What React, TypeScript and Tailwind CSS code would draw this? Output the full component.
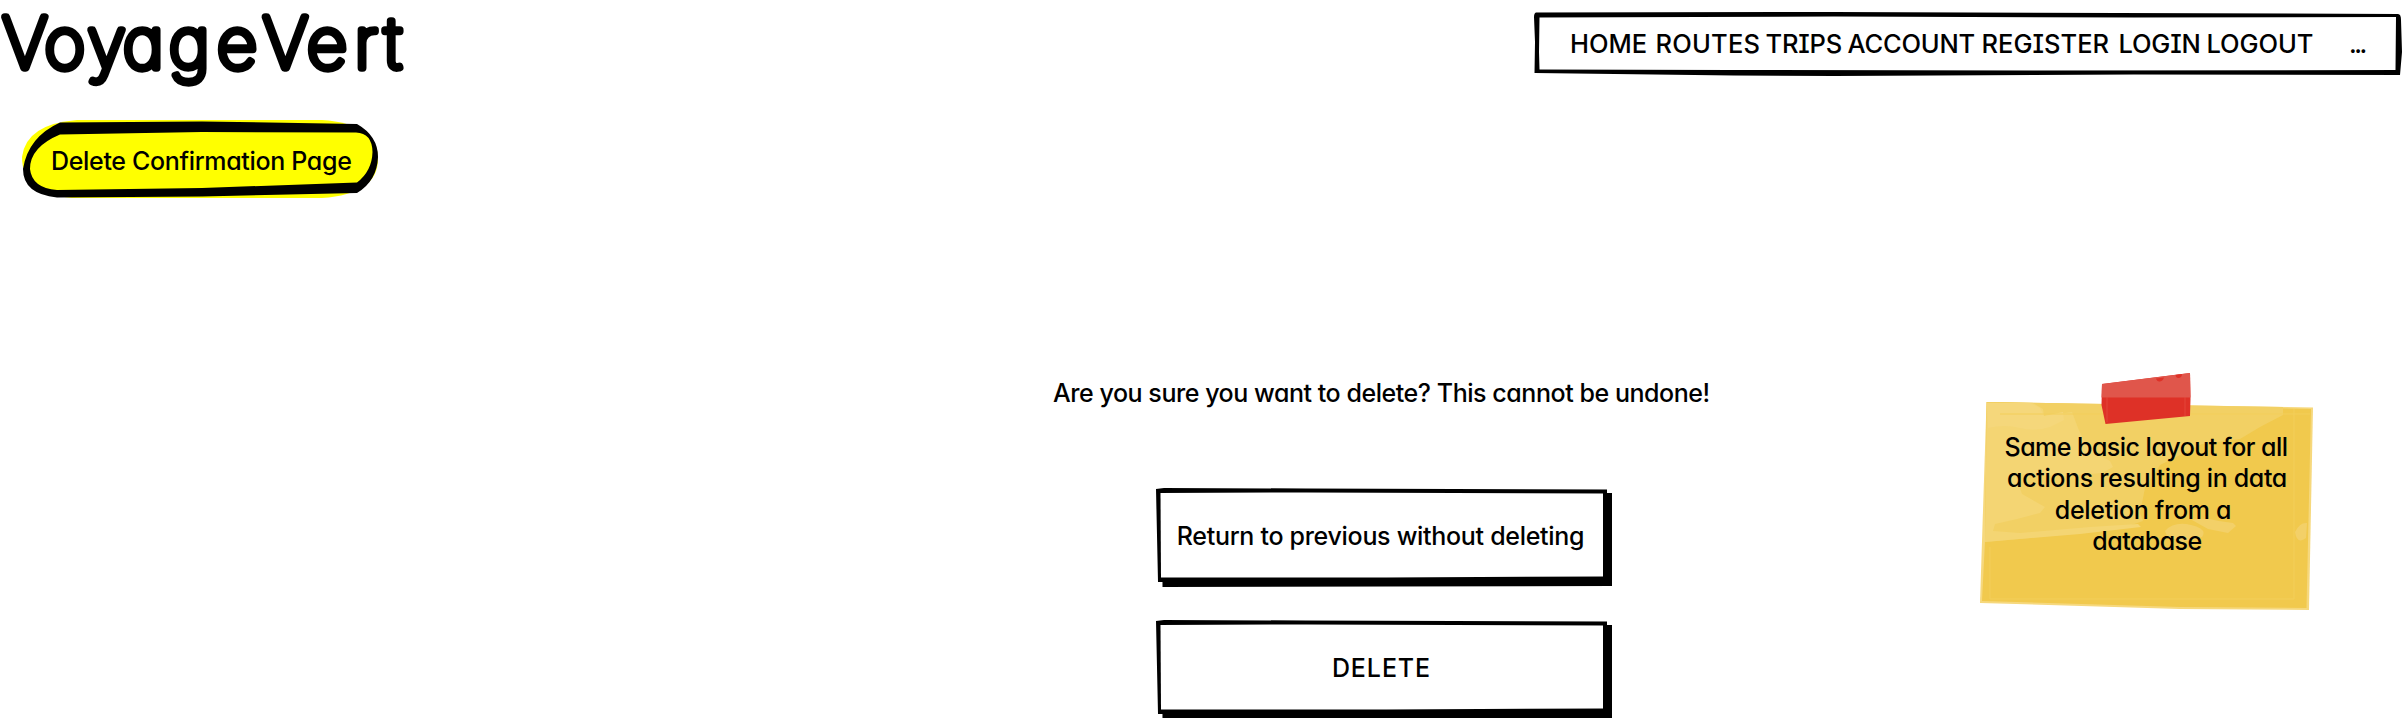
import React from "react";

const NAV = [
  { label: "HOME", cls: "w-[85.5px]" },
  { label: "ROUTES", cls: "w-[110px] tracking-[0.2px]" },
  { label: "TRIPS", cls: "w-[82px] tracking-[-0.2px]" },
  { label: "ACCOUNT", cls: "w-[134px] tracking-[-0.2px]" },
  { label: "REGISTER", cls: "w-[137px]" },
  { label: "LOGIN", cls: "w-[88px] tracking-[-0.2px]" },
  { label: "LOGOUT", cls: "w-[142.5px] tracking-[-0.1px]" },
];

function Logo() {
  return (
    <svg className="block h-[110px] w-[420px]" viewBox="0 0 420 110">
      <text
        x="2.500 44.500 87.500 123 169 217 263 307 354.500 384.500"
        y="67.700"
        fontSize="70"
        stroke="#000"
        strokeWidth="7.300"
        strokeLinejoin="round"
        className="font-thin"
      >
        VoyageVert
      </text>
    </svg>
  );
}

function ActionButton({ children }: { children: React.ReactNode }) {
  return (
    <button className="relative block h-[99px] w-[457px] text-[25px] leading-[30px]">
      <svg className="absolute left-0 top-0 h-[99px] w-[457px]" viewBox="0 0 457 99">
        <path d="M6 5H456V98L230 98.500 6.500 99Z" />
        <path d="M0 1L8 0 150 0.500 451 1.500V94L230 94.500 2 94Z" />
        <path d="M4.500 5L150 4.500 447 5.500V88.500L230 89.500 5 89.500Z" fill="#fff" />
      </svg>
      <span className="relative flex h-[99px] w-[451px] items-center justify-center whitespace-nowrap pb-[3px]">
        {children}
      </span>
    </button>
  );
}

function StickyNote() {
  return (
    <aside className="relative h-[240px] w-[334px]">
      <svg className="absolute left-0 top-0 h-[240px] w-[334px]" viewBox="0 0 334 240">
        <path d="M6.500 29L333 34.500 329 237 200 236 0 230Z" fill="#f6d87d" />
        <path d="M7 29L331 36 326.500 235 200 234 2 228 5 168Z" fill="#f1c94d" />
        <path d="M6.500 29L303 34V42L280 54 260 66 222 71 180 92 165 115 160 140 163 148 140 156 50 165 5 169Z" fill="#f2d064" />
        <path d="M7 30L53 30 63 36 64 43 92 39 98 55 105 70 117 81 130 88 133 94 122 100 85 103 35 101 42 121 65 134 60 140 37 146 15 151 13 158 40 160 110 154 158 151 161 154 100 161 5 169Z" fill="#f4d573" />
        <path d="M8 55Q25 51 40 55T70 54L84 47 83 39 64 43 60 35 50 30 7 30Z" fill="#f5d77b" />
        <path d="M185 158Q194 148 211 152T222 164L202 169 187 163ZM212 147Q224 144 239 148L253 150 256 153 248 160 228 156ZM315 159Q320 149 327 150L326 165Q317 172 315 159Z" fill="#f3d068" />
        <path d="M10 174V226M10 226H314V36M20 41H330" fill="none" stroke="#f3ce5a" strokeWidth="1" />
        <path d="M122 11L210 0 210.500 26 210 43 125.500 51 121.500 32Z" fill="#de3127" />
        <path d="M122 11L210 0 210.500 24.500H121.500Z" fill="#e0564b" />
        <path d="M176 5.500L184 4.500Q183 8 180 8.500T176 5.500ZM195.500 2L202 1Q202 4.500 199 5T195.500 2Z" fill="#de3127" />
        <path d="M127 24V49M205 24V43" stroke="#e34b40" strokeWidth="0.800" />
      </svg>
      <p className="relative flex flex-col items-center whitespace-nowrap pt-[59px] text-[25px] leading-[31.300px]">
        <span className="-translate-x-[1px] tracking-[-0.530px]">Same basic layout for all</span>
        <span className="tracking-[-0.350px]">actions resulting in data</span>
        <span className="-translate-x-[4px] tracking-[-0.300px]">deletion from a</span>
        <span className="tracking-[-0.550px]">database</span>
      </p>
    </aside>
  );
}

export default function App() {
  return (
    <div className="h-[718px] w-[2402px] overflow-hidden bg-white font-['Inter','Liberation_Sans',sans-serif] font-medium text-black [font-feature-settings:'cv11','cv08']">
      <header className="flex h-[119px] items-start justify-between">
        <h1>
          <Logo />
        </h1>
        <nav className="relative mt-[12px] h-[65px] w-[868px]">
          <svg className="absolute left-0 top-0 h-[65px] w-[868px]" viewBox="0 0 868 65">
            <path d="M2 0.500L300 0 864 2Q867 2 867 8L868 40 866 63 600 62.500 300 64 200 63.500 0.500 61 1 30 0 5Q0 1 2 0.500Z" />
            <path d="M5.500 5.500L300 4.500 600 5.500 862 5 861.500 58 500 58.500 200 58 5.500 57.500 5 40Z" fill="#fff" />
          </svg>
          <div className="relative flex h-[65px] items-center pl-[36px] text-[25.500px]">
            {NAV.map((n) => (
              <a key={n.label} className={n.cls}>
                {n.label}
              </a>
            ))}
            <span className="tracking-[-2.500px]">...</span>
          </div>
        </nav>
      </header>
      <div className="relative ml-[22px] h-[80px] w-[358px]">
        <svg className="absolute left-0 top-0 h-[80px] w-[358px]" viewBox="0 0 358 80">
          <path d="M55 1H300Q356 5 356 40T300 79H50Q0 75 0 38 4 5 55 1Z" fill="#ff0" />
          <path
            fillRule="evenodd"
            d="M38 3.500L180 2.500 335 5Q356 17 356 38 355 62 335 74L180 77.500 35 78.500Q1 75 1 50 6 18 38 3.500ZM38 15.500Q8 28 8 50 10 69 35 71L180 69 335 63.500Q350 52 350.500 33 350 14 334 13.500L180 13Z"
          />
        </svg>
        <p className="relative flex h-[85px] items-center whitespace-nowrap pl-[29px] text-[25px] tracking-[-0.330px]">
          Delete Confirmation Page
        </p>
      </div>
      <main className="flex pt-[174px]">
        <section className="ml-[1053px] w-[660px]">
          <p className="h-[115px] whitespace-nowrap pt-[4px] text-[25px] leading-[32px] tracking-[-0.450px]">
            Are you sure you want to delete? This cannot be undone!
          </p>
          <div className="ml-[103px] flex flex-col gap-[33px]">
            <ActionButton>
              <span className="-translate-x-[1px] tracking-[-0.300px]">Return to previous without deleting</span>
            </ActionButton>
            <ActionButton>
              <span className="tracking-[0.900px]">DELETE</span>
            </ActionButton>
          </div>
        </section>
        <div className="ml-[267px]">
          <StickyNote />
        </div>
      </main>
    </div>
  );
}
